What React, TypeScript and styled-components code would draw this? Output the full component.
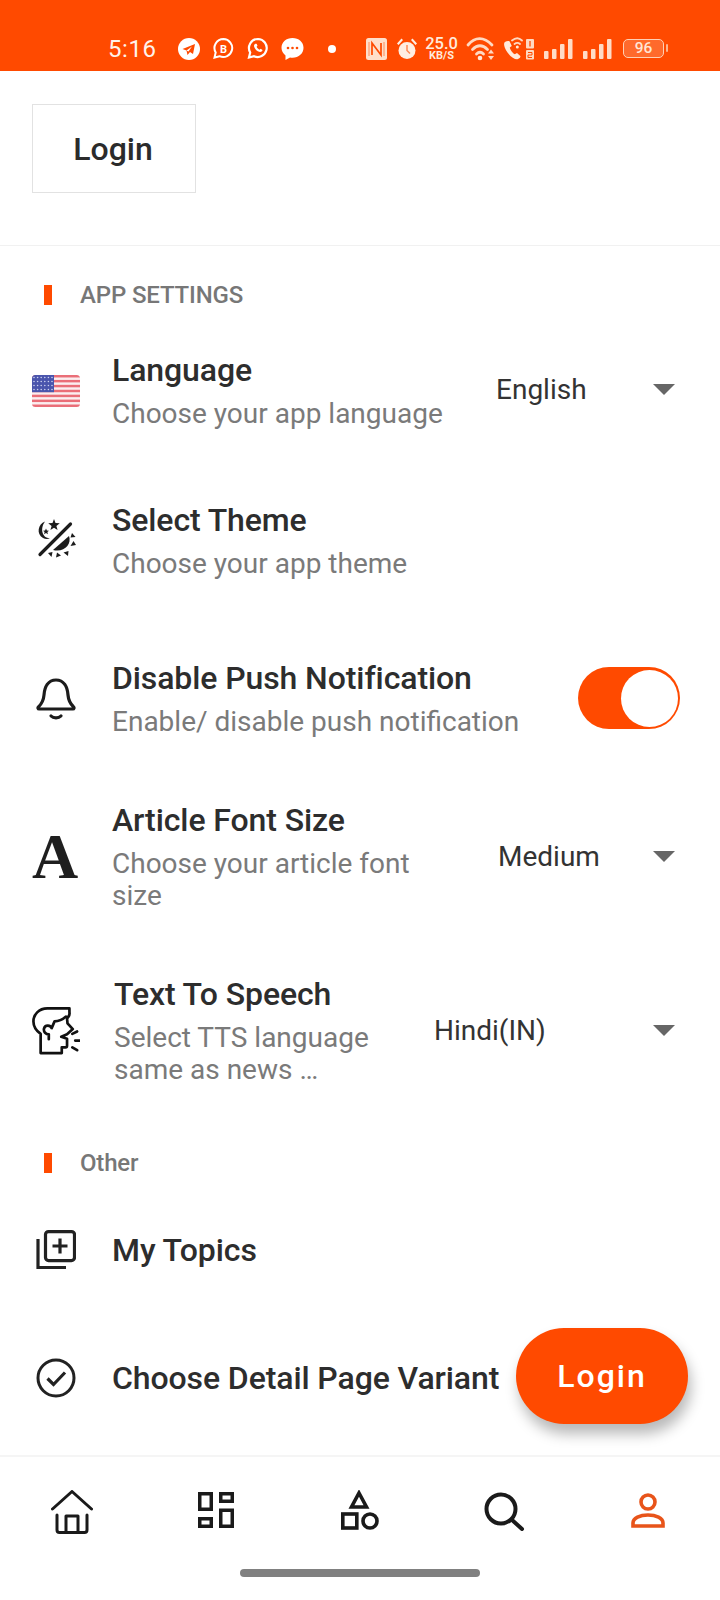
import React from "react";
import styled, { createGlobalStyle } from "styled-components";

const Global = createGlobalStyle`
  html, body { margin: 0; padding: 0; background: #fff; }
  body { font-family: Roboto, "Liberation Sans", sans-serif; }
  * { box-sizing: border-box; }
`;

const ORANGE = "#ff4a00";

const Page = styled.div`
  position: relative;
  width: 720px;
  height: 1600px;
  overflow: hidden;
  display: flex;
  flex-direction: column;
  background: #fff;
`;
const StatusBar = styled.div`
  height: 71px;
  flex: none;
  background: ${ORANGE};
  color: #fff;
  display: flex;
  align-items: center;
  padding: 26px 0 0 108px;
`;
const Clock = styled.span`
  font-size: 24px;
  width: 70px;
  flex: none;
  letter-spacing: 0.6px;
  color: #fff3ea;
`;
const StatusIcon = styled.svg<{ $gap?: number }>`
  flex: none;
  margin-right: ${(p) => p.$gap ?? 0}px;
  display: block;
`;
const Speed = styled.span`
  width: 33px;
  margin-right: 8px;
  margin-left: -1px;
  flex: none;
  display: flex;
  flex-direction: column;
  align-items: center;
  color: #ffeadd;
`;
const SpeedValue = styled.span`
  display: block;
  font-size: 16.5px;
  line-height: 14px;
  font-weight: 500;
`;
const SpeedUnit = styled.span`
  display: block;
  font-size: 11px;
  line-height: 10px;
  font-weight: 700;
`;
const Battery = styled.span`
  position: relative;
  width: 41px;
  height: 19px;
  flex: none;
  margin-left: 1px;
  border: 1.5px solid #ffd0b5;
  border-radius: 5px;
  background: #ff6a2c;
  font-size: 15.5px;
  line-height: 16px;
  font-weight: 500;
  text-align: center;
  color: #ffe6d6;
  &::after {
    content: "";
    position: absolute;
    right: -5px;
    top: 4px;
    width: 2px;
    height: 8px;
    background: #ffb48c;
    border-radius: 1px;
  }
`;
const LoginSection = styled.div`
  height: 175px;
  flex: none;
  padding: 33px 32px;
  border-bottom: 1px solid #f1f1f1;
`;
const LoginBox = styled.div`
  width: 164px;
  height: 89px;
  border: 1.5px solid #e2e2e2;
  display: flex;
  align-items: center;
  justify-content: center;
  padding-right: 2px;
  font-size: 32px;
  font-weight: 500;
  color: #2b2b2b;
`;
const SectionHead = styled.div<{ $height: number; $top: number; $caps?: boolean }>`
  height: ${(p) => p.$height}px;
  flex: none;
  display: flex;
  align-items: center;
  align-self: stretch;
  padding: ${(p) => p.$top}px 0 ${(p) => p.$height - p.$top - 30}px 44px;
  gap: 28px;
  font-size: 24px;
  font-weight: 500;
  color: #777;
  letter-spacing: ${(p) => (p.$caps ? -0.15 : -0.2)}px;
`;
const Marker = styled.i`
  display: block;
  width: 8px;
  height: 20px;
  background: ${ORANGE};
`;
const Row = styled.div<{ $height: number }>`
  height: ${(p) => p.$height}px;
  flex: none;
  display: flex;
  align-items: center;
  padding-left: 32px;
`;
const IconSlot = styled.div`
  width: 48px;
  flex: none;
  display: flex;
  justify-content: center;
`;
const Texts = styled.div<{ $left?: number; $width?: number }>`
  margin-left: ${(p) => p.$left ?? 32}px;
  width: ${(p) => p.$width ?? 340}px;
  flex: none;
`;
const Title = styled.div`
  font-size: 32px;
  line-height: 36px;
  font-weight: 500;
  color: #2d2d2d;
  white-space: nowrap;
  letter-spacing: -0.1px;
`;
const Sub = styled.div`
  font-size: 28px;
  line-height: 32px;
  margin-top: 10px;
  color: #7a7a7a;
`;
const Select = styled.div<{ $left: number; $width: number }>`
  margin-left: ${(p) => p.$left}px;
  width: ${(p) => p.$width}px;
  flex: none;
  display: flex;
  align-items: center;
  justify-content: space-between;
  font-size: 28px;
  color: #333;
  position: relative;
  top: -1px;
`;
const Caret = styled.i`
  display: block;
  width: 0;
  height: 0;
  border-left: 11px solid transparent;
  border-right: 11px solid transparent;
  border-top: 11px solid #666;
`;
const Toggle = styled.div`
  margin-left: 30px;
  width: 102px;
  height: 62px;
  flex: none;
  border-radius: 31px;
  background: ${ORANGE};
  display: flex;
  justify-content: flex-end;
  align-items: center;
  padding-right: 2px;
  position: relative;
  top: -1px;
`;
const Knob = styled.i`
  display: block;
  width: 57px;
  height: 57px;
  border-radius: 50%;
  background: #fff;
`;
const Fab = styled.div`
  position: absolute;
  left: 516px;
  top: 1328px;
  width: 172px;
  height: 96px;
  border-radius: 48px;
  background: ${ORANGE};
  color: #fff;
  font-size: 32px;
  font-weight: 500;
  letter-spacing: 2px;
  display: flex;
  align-items: center;
  justify-content: center;
  box-shadow: 3px 10px 14px rgba(0, 0, 0, 0.28);
`;
const Spacer = styled.div`
  flex: 1;
`;
const Nav = styled.nav`
  height: 145px;
  flex: none;
  border-top: 2px solid #f5f5f5;
  display: flex;
  flex-direction: column;
  align-items: center;
`;
const NavIcons = styled.div`
  width: 100%;
  height: 112px;
  padding-top: 33px;
  display: grid;
  grid-template-columns: repeat(5, 1fr);
  justify-items: center;
  align-items: start;
`;
const NavItem = styled.div<{ $drop?: number }>`
  margin-top: ${(p) => p.$drop ?? 0}px;
  display: flex;
`;
const HomeBar = styled.div`
  width: 240px;
  height: 8px;
  border-radius: 4px;
  background: #808080;
`;

const W = "#fff";
const Tele = () => (
  <StatusIcon $gap={12} width="22" height="22" viewBox="0 0 22 22">
    <circle cx="11" cy="11" r="11" fill={W} />
    <path d="M17 6 4.5 11l4 1.5L9.5 17l2.5-3 3 2z" fill={ORANGE} />
    <path d="M8.5 12.5 14 8.5l-3.5 5z" fill={W} />
  </StatusIcon>
);
const Biz = () => (
  <StatusIcon $gap={12} width="23" height="23" viewBox="0 0 23 23">
    <path d="M11.5 2a9 9 0 0 0-7.8 13.5L2.5 20.5l5-1.3A9 9 0 1 0 11.5 2z" fill="none" stroke={W} strokeWidth="2" />
    <text x="11.5" y="15.5" textAnchor="middle" fontSize="11" fontWeight="700" fill={W} fontFamily="Roboto">B</text>
  </StatusIcon>
);
const Whats = () => (
  <StatusIcon $gap={12} width="22" height="23" viewBox="0 0 22 23">
    <path d="M11 2a9 9 0 0 0-7.8 13.5L2 20.5l5-1.3A9 9 0 1 0 11 2z" fill="none" stroke={W} strokeWidth="2.2" />
    <path d="M8 7c-1.5 1-1.3 3 .5 5.2S13 15.6 14.6 14.6c1-.6 1-1.6.6-1.9l-1.6-.9-1 1c-1.2-.4-2.5-1.8-3-3l.9-1-.8-1.7C9.400 6.600 8.600 6.600 8 7z" fill={W} />
  </StatusIcon>
);
const Msg = () => (
  <StatusIcon $gap={0} width="23" height="24" viewBox="0 0 23 24">
    <path d="M11.500 1C5.200 1 .5 5.200.5 10.800c0 3.200 1.500 5.800 4 7.600V23l4.500-2.500c.8.200 1.600.2 2.500.2 6.300 0 11-4.200 11-9.900S17.800 1 11.500 1z" fill={W} />
    <circle cx="7" cy="11" r="1.300" fill={ORANGE} />
    <circle cx="11.500" cy="11" r="1.300" fill={ORANGE} />
    <circle cx="16" cy="11" r="1.300" fill={ORANGE} />
  </StatusIcon>
);
const StatusDot = styled(StatusIcon)`
  margin-left: 24px;
  margin-right: 30px;
`;
const Dot = () => (
  <StatusDot width="8" height="8" viewBox="0 0 8 8">
    <circle cx="4" cy="4" r="4" fill={W} />
  </StatusDot>
);
const Nfc = () => (
  <StatusIcon $gap={9} width="21" height="22" viewBox="0 0 21 22">
    <rect width="21" height="22" rx="2.500" fill="#ffdfcb" />
    <path d="M6 17V5l9 12V5" fill="none" stroke={ORANGE} strokeWidth="1.700" />
    <path d="M3 4v14M18 4v14" stroke={ORANGE} strokeWidth="1" opacity=".55" />
  </StatusIcon>
);
const Alarm = () => (
  <StatusIcon $gap={8} width="22" height="23" viewBox="0 0 22 23">
    <circle cx="11" cy="13.500" r="8.500" fill="#ffeee3" />
    <path d="M11 8v5.500l3 3" fill="none" stroke="#ff8a57" strokeWidth="1.500" />
    <path d="M1 6.500 5.500 1.500 7 3 2.500 8zM21 6.500 16.500 1.500 15 3l4.500 5z" fill="#ffeee3" />
  </StatusIcon>
);
const Wifi = () => (
  <StatusIcon $gap={6} width="30" height="24" viewBox="0 0 30 24">
    <g fill="none" stroke="#ffd9c2" strokeWidth="2.800" strokeLinecap="round">
      <path d="M2 8C9-.5 18-.5 26 8" />
      <path d="M6.500 12.500c5-5 10-5 15 0" />
      <path d="M10.500 17c2.500-2.400 4.500-2.400 7 0" />
    </g>
    <circle cx="14" cy="21" r="2.300" fill="#ffeadd" />
    <path d="M25 12.500l3 4h-6zM25 23l3-4h-6z" fill="#ffd9c2" />
  </StatusIcon>
);
const Call = () => (
  <StatusIcon $gap={8} width="34" height="24" viewBox="0 0 34 24">
    <path d="M3 5c-1.500 1-1.500 5 2.500 10.500S14 23 16 22c1.500-.7 2.800-2 2.300-3l-3.300-3-2.200 1.300c-2-1-4.500-4.500-5-6.800L9.800 9 7.500 4.300C6.300 3.800 4.200 4.200 3 5z" fill="#ffeadd" />
    <path d="M10 3.500c3.500-3 7-3 10 0M12.500 7c2-1.600 3.600-1.600 5.500 0" fill="none" stroke="#ffd9c2" strokeWidth="1.800" strokeLinecap="round" />
    <circle cx="15.300" cy="10" r="1.500" fill="#ffeadd" />
    <rect x="24" y="2" width="8" height="9.500" rx="1" fill="#ffd9c2" />
    <rect x="24" y="13" width="8" height="9.500" rx="1" fill="#ffd9c2" />
    <path d="M28 4v5.500" stroke={ORANGE} strokeWidth="1.300" />
    <path d="M26 15.500h4v2.500h-4v2.500h4" fill="none" stroke={ORANGE} strokeWidth="1" />
  </StatusIcon>
);
const Signal = ({ gap }: { gap: number }) => (
  <StatusIcon $gap={gap} width="29" height="20" viewBox="0 0 29 20">
    <rect x="0" y="12" width="4.500" height="8" rx="1" fill="#ffdcc6" />
    <rect x="8" y="10" width="4.500" height="10" rx="1" fill="#ffdcc6" />
    <rect x="16" y="5" width="4.500" height="15" rx="1" fill="#ffdcc6" />
    <rect x="24" y="0" width="4.500" height="20" rx="1" fill="#ffdcc6" />
  </StatusIcon>
);

const Flag = () => (
  <svg width="48" height="32" viewBox="0 0 48 32">
    <defs>
      <clipPath id="fc"><rect width="48" height="32" rx="3.500" /></clipPath>
    </defs>
    <g clipPath="url(#fc)">
      <rect width="48" height="32" fill="#fbeef0" />
      {[0, 1, 2, 3, 4, 5, 6].map((i) => (
        <rect key={i} y={i * 4.92} width="48" height="2.460" fill="#ea6e78" />
      ))}
      <rect width="22" height="17.200" fill="#4a55ad" />
      {Array.from({ length: 24 }).map((_, i) => (
        <circle key={i} cx={2 + (i % 6) * 3.600} cy={2.500 + Math.floor(i / 6) * 4} r="0.800" fill="#ccd0ef" />
      ))}
    </g>
  </svg>
);
const ThemeIcon = () => (
  <svg width="42" height="44" viewBox="0 0 42 44">
    <path d="M10 2.500C3 5 1 15 8 19c2.500 1.300 5 1.200 7 .2C7.500 19.500 4.500 10 10 2.500z" fill="#1c1c1c" />
    <path d="M19 0l1.500 4 4.300.2-3.400 2.700 1.200 4.200-3.600-2.400-3.600 2.400 1.200-4.200-3.400-2.700 4.300-.2z" fill="#1c1c1c" />
    <path d="M11 9.500l.9 2 2.100.2-1.600 1.400.5 2.100-1.900-1.100-1.900 1.100.5-2.100-1.600-1.400 2.100-.2z" fill="#1c1c1c" />
    <path d="M35.500 5 5 35.500" stroke="#1c1c1c" strokeWidth="3.200" strokeLinecap="round" />
    <path d="M34 17c3 8-5 17-16 14z" fill="#1c1c1c" />
    <path d="M37 14l3.500 4-5 .5zM41 26l-5.500 1 3-5zM33 37l-4.500-3.500 5-1.500zM21 38.500l1-5 4 3zM13 34l3.500 4 1-5z" fill="#1c1c1c" />
  </svg>
);
const Bell = () => (
  <svg width="40" height="46" viewBox="0 0 40 46">
    <path d="M3 33h34c1 0 1.400-1.300.6-2C35 28.500 32.500 25 32 19c-.6-8-4-15-12-15S8.600 11 8 19c-.5 6-3 9.500-5.600 12-.8.700-.4 2 .6 2z" fill="none" stroke="#1c1c1c" strokeWidth="3.200" strokeLinejoin="round" />
    <path d="M15 40c2.500 2.600 7.500 2.600 10 0" fill="none" stroke="#1c1c1c" strokeWidth="3.200" strokeLinecap="round" />
  </svg>
);
const SerifA = styled.span`
  font-family: "Liberation Serif", serif;
  font-weight: 700;
  font-size: 64px;
  line-height: 62px;
  color: #1f1f1f;
  margin-left: -2px;
`;
const Speaker = () => (
  <svg width="50" height="50" viewBox="0 0 50 50" fill="none" stroke="#111" strokeWidth="2.800" strokeLinejoin="round" strokeLinecap="round">
    <path d="M39 1.500H16C7 1.500 1.500 8 1.500 15c0 5 3.500 10 7.500 13v20h22v-6h4c1 0 1.500-1 1.500-2v-7l-6-2 6-2.500 6-5.500-5.500-6-.5-5c2-2 3-4 2.500-6.500z" />
    <path d="M35.500 10c-4 3.500-8 5-12 5l-3 7c-1.500-3.500-7-3.500-8 .5-.7 3.500 2 6 5 6v5" />
    <path d="M42 28l5-2.500M45 35h4.500M42 42l5 3" />
  </svg>
);
const Topics = () => (
  <svg width="40" height="40" viewBox="0 0 40 40" fill="none" stroke="#222" strokeWidth="3.200">
    <rect x="9.500" y="1.600" width="29" height="29" rx="3" />
    <path d="M2 9v28.500h28" />
    <path d="M24 8.500v15M16.500 16h15" />
  </svg>
);
const Check = () => (
  <svg width="40" height="40" viewBox="0 0 40 40" fill="none" stroke="#222" strokeWidth="3">
    <circle cx="20" cy="20" r="18" />
    <path d="M11.500 20.500 17.500 26.500 29 14.500" strokeWidth="3.200" />
  </svg>
);
const HomeI = () => (
  <svg width="42" height="44" viewBox="0 0 42 44" fill="none" stroke="#1a1a1a" strokeWidth="3" strokeLinecap="round" strokeLinejoin="round">
    <path d="M1.500 19 21 1.500 40.500 19" />
    <path d="M6 25v15c0 1.500 1 2.500 2.500 2.500h25c1.500 0 2.500-1 2.500-2.500V25" />
    <path d="M15 42V26h12v16" />
  </svg>
);
const GridI = () => (
  <svg width="36" height="36" viewBox="0 0 36 36" fill="none" stroke="#1a1a1a" strokeWidth="3.500">
    <rect x="1.750" y="1.750" width="11.500" height="15.500" />
    <rect x="22.750" y="1.750" width="11.500" height="7.500" />
    <rect x="1.750" y="26.750" width="11.500" height="7.500" />
    <rect x="22.750" y="18.250" width="11.500" height="16" />
  </svg>
);
const ShapesI = () => (
  <svg width="38" height="40" viewBox="0 0 38 40" fill="none" stroke="#1a1a1a" strokeWidth="3.600">
    <path d="M18 3 25.500 17h-15z" />
    <rect x="1.800" y="24" width="14" height="14" />
    <ellipse cx="29" cy="31" rx="7" ry="7" />
  </svg>
);
const SearchI = () => (
  <svg width="41" height="39" viewBox="0 0 41 39" fill="none" stroke="#1a1a1a" strokeWidth="4" strokeLinecap="round">
    <circle cx="17" cy="17" r="14.500" />
    <path d="M27.500 27.500 38 37" />
  </svg>
);
const PersonI = () => (
  <svg width="34" height="36" viewBox="0 0 34 36" fill="none" stroke="#e8541a" strokeWidth="3.600">
    <circle cx="17" cy="9" r="7" />
    <path d="M2 33v-3c0-5 7-8 15-8s15 3 15 8v3z" />
  </svg>
);

export default function App() {
  return (
    <Page>
      <Global />
      <StatusBar>
        <Clock>5:16</Clock>
        <Tele />
        <Biz />
        <Whats />
        <Msg />
        <Dot />
        <Nfc />
        <Alarm />
        <Speed>
          <SpeedValue>25.0</SpeedValue>
          <SpeedUnit>KB/S</SpeedUnit>
        </Speed>
        <Wifi />
        <Call />
        <Signal gap={10} />
        <Signal gap={10} />
        <Battery>96</Battery>
      </StatusBar>
      <LoginSection>
        <LoginBox>Login</LoginBox>
      </LoginSection>
      <SectionHead $height={71} $top={34} $caps>
        <Marker />
        APP SETTINGS
      </SectionHead>
      <Row $height={147}>
        <IconSlot><Flag /></IconSlot>
        <Texts>
          <Title>Language</Title>
          <Sub>Choose your app language</Sub>
        </Texts>
        <Select $left={44} $width={179}>English<Caret /></Select>
      </Row>
      <Row $height={154}>
        <IconSlot><ThemeIcon /></IconSlot>
        <Texts>
          <Title>Select Theme</Title>
          <Sub>Choose your app theme</Sub>
        </Texts>
      </Row>
      <Row $height={162}>
        <IconSlot><Bell /></IconSlot>
        <Texts $width={436}>
          <Title>Disable Push Notification</Title>
          <Sub>Enable/ disable push notification</Sub>
        </Texts>
        <Toggle><Knob /></Toggle>
      </Row>
      <Row $height={154}>
        <IconSlot><SerifA>A</SerifA></IconSlot>
        <Texts>
          <Title>Article Font Size</Title>
          <Sub>Choose your article font size</Sub>
        </Texts>
        <Select $left={46} $width={177}>Medium<Caret /></Select>
      </Row>
      <Row $height={194}>
        <IconSlot><Speaker /></IconSlot>
        <Texts $left={34} $width={268}>
          <Title>Text To Speech</Title>
          <Sub>Select TTS language same as news …</Sub>
        </Texts>
        <Select $left={52} $width={241}>Hindi(IN)<Caret /></Select>
      </Row>
      <SectionHead $height={57} $top={20}>
        <Marker />
        Other
      </SectionHead>
      <Row $height={130}>
        <IconSlot><Topics /></IconSlot>
        <Texts><Title>My Topics</Title></Texts>
      </Row>
      <Row $height={126}>
        <IconSlot><Check /></IconSlot>
        <Texts><Title>Choose Detail Page Variant</Title></Texts>
      </Row>
      <Spacer />
      <Nav>
        <NavIcons>
          <NavItem><HomeI /></NavItem>
          <NavItem $drop={2}><GridI /></NavItem>
          <NavItem><ShapesI /></NavItem>
          <NavItem $drop={2}><SearchI /></NavItem>
          <NavItem $drop={3}><PersonI /></NavItem>
        </NavIcons>
        <HomeBar />
      </Nav>
      <Fab>Login</Fab>
    </Page>
  );
}
